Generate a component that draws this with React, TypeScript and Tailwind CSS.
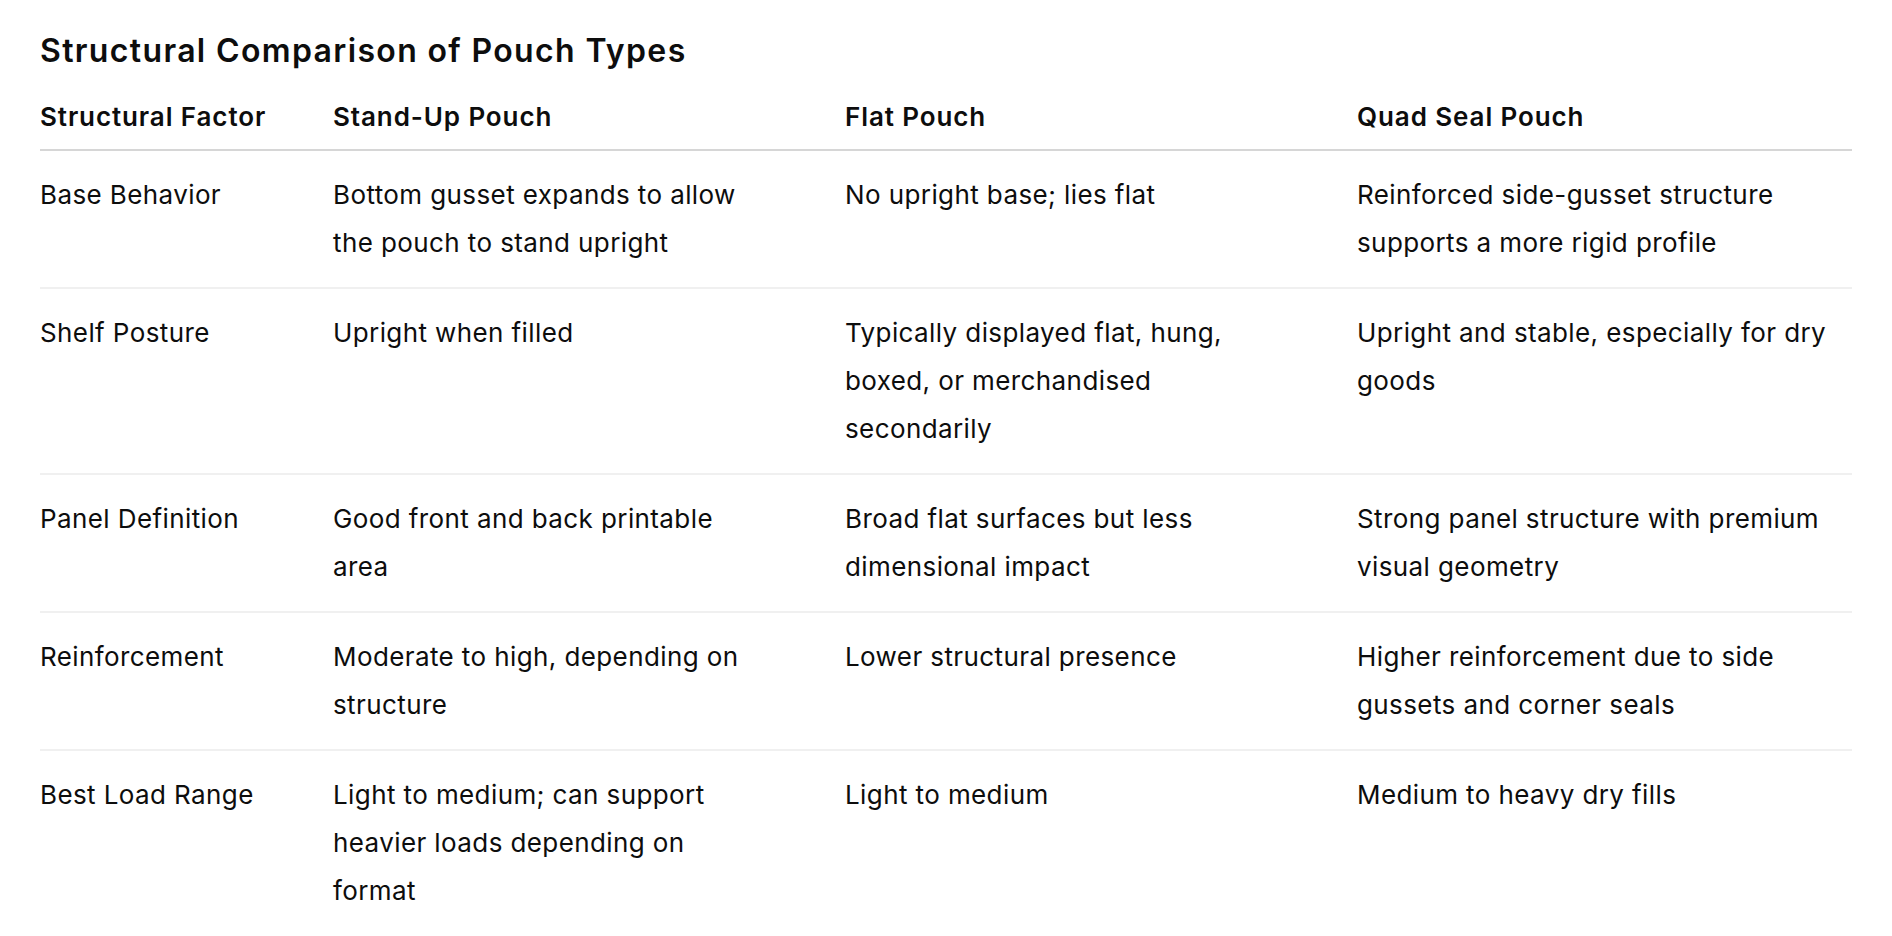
const rows: [string, string, string, string][] = [
  [
    "Base Behavior",
    "Bottom gusset expands to allow the pouch to stand upright",
    "No upright base; lies flat",
    "Reinforced side-gusset structure supports a more rigid profile",
  ],
  [
    "Shelf Posture",
    "Upright when filled",
    "Typically displayed flat, hung, boxed, or merchandised secondarily",
    "Upright and stable, especially for dry goods",
  ],
  [
    "Panel Definition",
    "Good front and back printable area",
    "Broad flat surfaces but less dimensional impact",
    "Strong panel structure with premium visual geometry",
  ],
  [
    "Reinforcement",
    "Moderate to high, depending on structure",
    "Lower structural presence",
    "Higher reinforcement due to side gussets and corner seals",
  ],
  [
    "Best Load Range",
    "Light to medium; can support heavier loads depending on format",
    "Light to medium",
    "Medium to heavy dry fills",
  ],
];

const headers = ["Structural Factor", "Stand-Up Pouch", "Flat Pouch", "Quad Seal Pouch"];

export default function App() {
  return (
    <div className="min-h-screen bg-white px-[40px] pt-[31px] text-[#0d0d0d] font-['Inter',sans-serif]">
      <h3 className="mb-[22px] text-[32px] font-semibold leading-[40px] tracking-[1.35px]">
        Structural Comparison of Pouch Types
      </h3>

      <div className="grid grid-cols-[293px_512px_512px_1fr] border-b-2 border-[#d6d6d6] pb-[8px] text-[26px] font-semibold leading-[48px] tracking-[0.9px]">
        {headers.map((h) => (
          <div key={h} className="pr-[60px]">
            {h}
          </div>
        ))}
      </div>

      {rows.map((row, i) => {
        let border = "border-b-2 border-[#f0f0f0]";
        if (i === rows.length - 1) {
          border = "";
        }
        return (
          <div
            key={row[0]}
            className={`grid grid-cols-[293px_512px_512px_1fr] py-[20px] text-[26px] leading-[48px] tracking-[0.4px] ${border}`}
          >
            <div className="pr-[40px]">{row[0]}</div>
            <div className="pr-[77px]">{row[1]}</div>
            <div className="pr-[77px]">{row[2]}</div>
            <div>{row[3]}</div>
          </div>
        );
      })}
    </div>
  );
}
